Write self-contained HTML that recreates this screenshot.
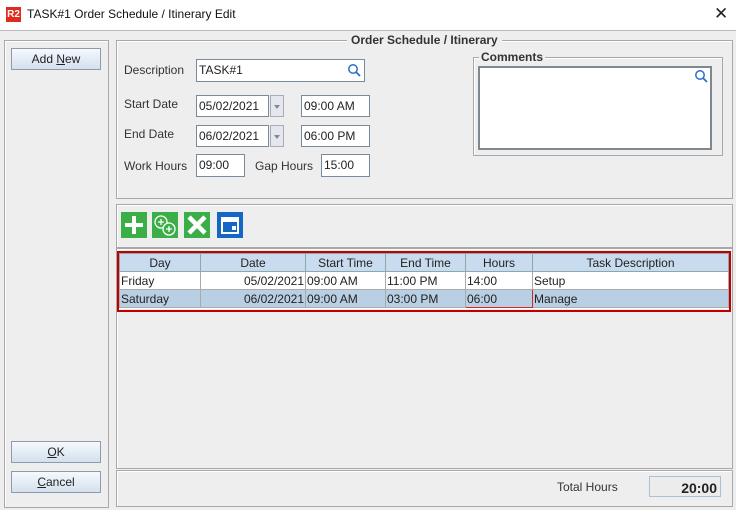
<html><head><style>
body{margin:0;width:736px;height:510px;background:#eeeeee;font-family:"Liberation Sans",sans-serif;font-size:12px;color:#222;position:relative;overflow:hidden}
.a{position:absolute}
.btn{position:absolute;border:1px solid #8e9aa8;background:linear-gradient(#f6f9fd,#d4e0ee);text-align:center;line-height:20px;font-size:12px;color:#222}
.inp{position:absolute;background:#fff;border:1px solid #7a8a99;height:20px;line-height:20px;padding-left:2px;box-sizing:border-box;font-size:12px}
.lbl{position:absolute;font-size:12px;color:#333}
.pan{position:absolute;border:1px solid #a8a8a8;box-shadow:inset 1px 1px 0 #fff}
.dd{position:absolute;width:14px;height:22px;border:1px solid #aab;background:#e4e8ee;box-sizing:border-box}
.dd:after{content:"";position:absolute;left:3px;top:9px;border:3px solid transparent;border-top:4px solid #888}
table{border-collapse:collapse;font-size:12px;table-layout:fixed}
td{height:18px;padding:0 1px;border:1px solid #aaa;white-space:nowrap;overflow:hidden}
th{height:18px;padding:0;font-weight:normal;background:#c8dbef;border:1px solid #8aa;text-align:center;font-size:12px}
</style></head><body>
<div class="a" style="left:0;top:0;width:736px;height:30px;background:#fff;border-bottom:1px solid #bbb"></div>
<div class="a" style="left:6px;top:7px;width:15px;height:15px;background:#e02a1e;color:#fff;font-size:10px;font-weight:bold;line-height:15px;text-align:center">R2</div>
<div class="a" style="left:27px;top:7px;font-size:12px;color:#111">TASK#1 Order Schedule / Itinerary Edit</div>
<div class="a" style="left:714px;top:4px;font-size:17px;color:#222">✕</div>

<div class="pan" style="left:4px;top:40px;width:103px;height:466px"></div>
<div class="btn" style="left:11px;top:48px;width:88px">Add <u>N</u>ew</div>
<div class="btn" style="left:11px;top:441px;width:88px"><u>O</u>K</div>
<div class="btn" style="left:11px;top:471px;width:88px"><u>C</u>ancel</div>

<div class="pan" style="left:116px;top:40px;width:615px;height:157px"></div>
<div class="a" style="left:347px;top:33px;background:#eee;padding:0 4px;font-weight:bold;color:#333">Order Schedule / Itinerary</div>
<div class="lbl" style="left:124px;top:63px">Description</div>
<div class="inp" style="left:196px;top:59px;width:169px;height:23px">TASK#1</div>
<svg class="a" style="left:347px;top:63px" width="14" height="14"><circle cx="6" cy="6" r="4.2" fill="none" stroke="#2a6fc9" stroke-width="1.5"/><path d="M9 9l4 4" stroke="#2a6fc9" stroke-width="1.8"/></svg>
<div class="lbl" style="left:124px;top:97px">Start Date</div>
<div class="inp" style="left:196px;top:95px;width:73px;height:22px">05/02/2021</div>
<div class="dd" style="left:270px;top:95px"></div>
<div class="inp" style="left:301px;top:95px;width:69px;height:22px">09:00 AM</div>
<div class="lbl" style="left:124px;top:127px">End Date</div>
<div class="inp" style="left:196px;top:125px;width:73px;height:22px">06/02/2021</div>
<div class="dd" style="left:270px;top:125px"></div>
<div class="inp" style="left:301px;top:125px;width:69px;height:22px">06:00 PM</div>
<div class="lbl" style="left:124px;top:159px">Work Hours</div>
<div class="inp" style="left:196px;top:154px;width:49px;height:23px">09:00</div>
<div class="lbl" style="left:255px;top:159px">Gap Hours</div>
<div class="inp" style="left:321px;top:154px;width:49px;height:23px">15:00</div>

<div class="pan" style="left:473px;top:57px;width:248px;height:97px"></div>
<div class="a" style="left:479px;top:50px;background:#eee;padding:0 2px;font-weight:bold;color:#333">Comments</div>
<div class="a" style="left:478px;top:66px;width:230px;height:80px;background:#fff;border:2px solid #7f878f"></div>
<svg class="a" style="left:694px;top:69px" width="14" height="14"><circle cx="6" cy="6" r="4.2" fill="none" stroke="#2a6fc9" stroke-width="1.5"/><path d="M9 9l4 4" stroke="#2a6fc9" stroke-width="1.8"/></svg>

<div class="pan" style="left:116px;top:204px;width:615px;height:42px"></div>
<svg class="a" style="left:121px;top:212px" width="124" height="27">
<rect x="0" y="0" width="26" height="26" fill="#3cae48"/><path d="M13 4v18M4 13h18" stroke="#fff" stroke-width="4"/>
<rect x="31" y="0" width="26" height="26" fill="#3cae48"/><circle cx="40" cy="10" r="6" fill="none" stroke="#fff" stroke-width="1.3"/><circle cx="48" cy="17" r="6" fill="#3cae48" stroke="#fff" stroke-width="1.3"/><path d="M40 7v6M37 10h6M48 14v6M45 17h6" stroke="#fff" stroke-width="1.3"/>
<rect x="63" y="0" width="26" height="26" fill="#3cae48"/><path d="M68 5l16 16M84 5l-16 16" stroke="#fff" stroke-width="4.5"/>
<rect x="96" y="0" width="26" height="26" fill="#1467c2"/><rect x="101" y="6" width="16" height="15" fill="none" stroke="#fff" stroke-width="2"/><rect x="101" y="6" width="16" height="4" fill="#fff"/><rect x="111" y="14" width="4" height="4" fill="#fff"/>
</svg>

<div class="pan" style="left:116px;top:248px;width:615px;height:219px"></div>
<div class="a" style="left:119px;top:253px;width:609px;height:56px;background:#fff"></div>
<table class="a" style="left:119px;top:253px;width:610px">
<colgroup><col style="width:81px"><col style="width:105px"><col style="width:80px"><col style="width:80px"><col style="width:67px"><col></colgroup>
<tr><th>Day</th><th>Date</th><th>Start Time</th><th>End Time</th><th>Hours</th><th>Task Description</th></tr>
<tr><td>Friday</td><td style="text-align:right">05/02/2021</td><td>09:00 AM</td><td>11:00 PM</td><td>14:00</td><td>Setup</td></tr>
<tr style="background:#b8cfe4"><td>Saturday</td><td style="text-align:right">06/02/2021</td><td>09:00 AM</td><td>03:00 PM</td><td style="border:1px solid #d22">06:00</td><td>Manage</td></tr>
</table>
<div class="a" style="left:117px;top:251px;width:610px;height:57px;border:2px solid #c00000"></div>

<div class="pan" style="left:116px;top:470px;width:615px;height:35px"></div>
<div class="lbl" style="left:557px;top:480px">Total Hours</div>
<div class="a" style="left:649px;top:476px;width:72px;height:21px;border:1px solid #a9c0d8;background:#ececec;text-align:right;font-weight:bold;font-size:14px;line-height:23px;box-sizing:border-box;padding-right:3px">20:00</div>
</body></html>
